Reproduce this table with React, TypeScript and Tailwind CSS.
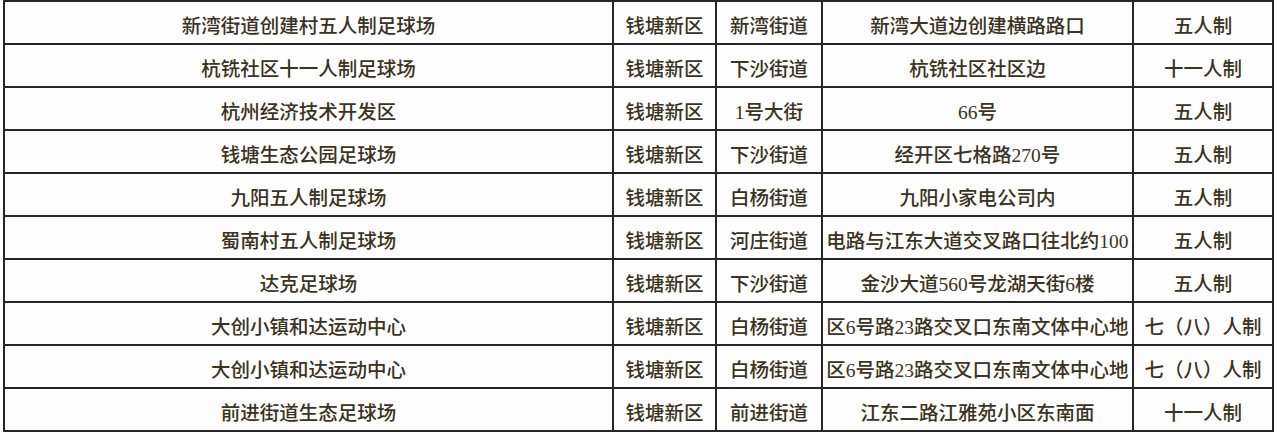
import React from "react";

// 足球场列表
const rows = [
  ["新湾街道创建村五人制足球场", "钱塘新区", "新湾街道", "新湾大道边创建横路路口", "五人制"],
  ["杭铣社区十一人制足球场", "钱塘新区", "下沙街道", "杭铣社区社区边", "十一人制"],
  ["杭州经济技术开发区", "钱塘新区", "1号大街", "66号", "五人制"],
  ["钱塘生态公园足球场", "钱塘新区", "下沙街道", "经开区七格路270号", "五人制"],
  ["九阳五人制足球场", "钱塘新区", "白杨街道", "九阳小家电公司内", "五人制"],
  ["蜀南村五人制足球场", "钱塘新区", "河庄街道", "电路与江东大道交叉路口往北约100", "五人制"],
  ["达克足球场", "钱塘新区", "下沙街道", "金沙大道560号龙湖天街6楼", "五人制"],
  ["大创小镇和达运动中心", "钱塘新区", "白杨街道", "区6号路23路交叉口东南文体中心地", "七（八）人制"],
  ["大创小镇和达运动中心", "钱塘新区", "白杨街道", "区6号路23路交叉口东南文体中心地", "七（八）人制"],
  ["前进街道生态足球场", "钱塘新区", "前进街道", "江东二路江雅苑小区东南面", "十一人制"],
];

export default function App() {
  return (
    <div className="w-[1280px] h-[434px] bg-white overflow-hidden">
      <div
        className="ml-[3px] w-[1271px] grid grid-cols-[607px_101px_104px_309px_138px] auto-rows-[41px] gap-[2px] bg-[#262626] border-2 border-[#262626] text-[#3a3322] text-[19.5px] font-medium"
        style={{ fontFamily: '"Liberation Serif", "Noto Sans CJK SC", serif' }}
      >
        {rows.map((r, i) =>
          r.map((c, j) => (
            <div
              key={i + "-" + j}
              className="bg-[#fdfdfd] flex items-center justify-center pt-[8px] leading-none whitespace-nowrap overflow-hidden"
            >
              {c}
            </div>
          ))
        )}
      </div>
    </div>
  );
}
